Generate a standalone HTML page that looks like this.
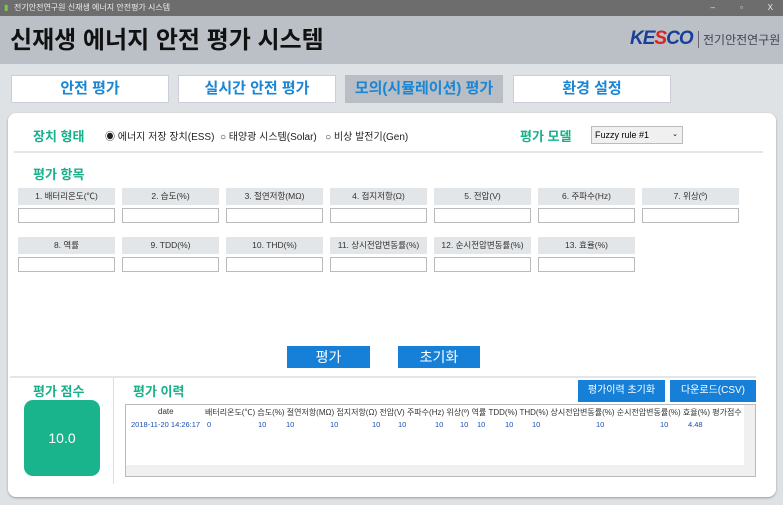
<!DOCTYPE html>
<html><head><meta charset="utf-8"><style>
*{margin:0;padding:0;box-sizing:border-box}
body{width:783px;height:505px;overflow:hidden;background:#dfe2e5;font-family:"Liberation Sans","Noto Sans CJK KR",sans-serif;position:relative}
.a{position:absolute}
.tb{left:0;top:0;width:783px;height:16px;background:#6d6d6d;color:#eee;font-size:8px;line-height:16px;padding-left:14px}
.hd{left:0;top:16px;width:783px;height:48px;background:#bac0c6}
.tab{top:75px;height:28px;width:158px;background:#fff;border:1px solid #ccd;color:#1a86d6;font-size:15px;font-weight:bold;text-align:center;line-height:26px}
.panel{left:8px;top:113px;width:768px;height:384px;background:#fff;border-radius:8px;box-shadow:0 1px 2px #999}
.g{color:#18b08a;font-weight:bold}
.lb{width:97px;height:17px;background:#e3e6e8;font-size:8.5px;text-align:center;line-height:17px;color:#333}
.in{width:97px;height:15px;border:1px solid #bbb;background:#fff}
.bb{background:#1680d8;color:#fff;text-align:center}
.t{font-size:8px;color:#333}
.v{font-size:7.5px;color:#1a4fb0}
</style></head><body>
<div class="a tb"><span style="position:absolute;left:4px;color:#7c4">▮</span>전기안전연구원 신재생 에너지 안전평가 시스템<span style="position:absolute;right:10px;top:0">X</span><span style="position:absolute;right:40px">▫</span><span style="position:absolute;right:68px">–</span></div>
<div class="a hd"></div>
<div class="a" style="left:10px;top:20px;font-size:24px;font-weight:bold;color:#111">신재생 에너지 안전 평가 시스템</div>
<div class="a" style="left:630px;top:28px;font-size:19px;font-weight:bold;font-style:italic;color:#1a3f99;letter-spacing:-1px">KE<span style="color:#d22">S</span>CO</div>
<div class="a" style="left:698px;top:31px;font-size:12px;color:#445;border-left:1px solid #667;padding-left:4px">전기안전연구원</div>
<div class="a tab" style="left:11px">안전 평가</div>
<div class="a tab" style="left:178px">실시간 안전 평가</div>
<div class="a tab" style="left:345px;background:#b8bec4;border-color:#b8bec4">모의(시뮬레이션) 평가</div>
<div class="a tab" style="left:513px">환경 설정</div>
<div class="a panel"></div>
<div class="a g" style="left:33px;top:126px;font-size:13px">장치 형태</div>
<div class="a" style="left:105px;top:128px;font-size:10px;color:#222">◉ 에너지 저장 장치(ESS) &nbsp;○ 태양광 시스템(Solar) &nbsp;&nbsp;○ 비상 발전기(Gen)</div>
<div class="a g" style="left:520px;top:126px;font-size:13px">평가 모델</div>
<div class="a" style="left:591px;top:126px;width:92px;height:18px;border:1px solid #bbb;background:#f0f0f0;font-size:9px;line-height:16px;padding-left:3px">Fuzzy rule #1<span style="position:absolute;right:4px;font-size:7px">⌄</span></div>
<div class="a" style="left:14px;top:151px;width:749px;height:2px;background:#e3e6e8"></div>
<div class="a g" style="left:33px;top:164px;font-size:13px">평가 항목</div>
<div class="a" style="left:18px;top:188px;display:grid;grid-template-columns:repeat(7,97px);column-gap:7px;row-gap:3px">
<div class="lb">1. 배터리온도(℃)</div><div class="lb">2. 습도(%)</div><div class="lb">3. 절연저항(MΩ)</div><div class="lb">4. 접지저항(Ω)</div><div class="lb">5. 전압(V)</div><div class="lb">6. 주파수(Hz)</div><div class="lb">7. 위상(º)</div>
<div class="in"></div><div class="in"></div><div class="in"></div><div class="in"></div><div class="in"></div><div class="in"></div><div class="in"></div>
</div>
<div class="a" style="left:18px;top:237px;display:grid;grid-template-columns:repeat(6,97px);column-gap:7px;row-gap:3px">
<div class="lb">8. 역률</div><div class="lb">9. TDD(%)</div><div class="lb">10. THD(%)</div><div class="lb">11. 상시전압변동률(%)</div><div class="lb">12. 순시전압변동률(%)</div><div class="lb">13. 효율(%)</div>
<div class="in"></div><div class="in"></div><div class="in"></div><div class="in"></div><div class="in"></div><div class="in"></div>
</div>
<div class="a bb" style="left:287px;top:346px;width:83px;height:22px;font-size:14px;line-height:22px">평가</div>
<div class="a bb" style="left:398px;top:346px;width:82px;height:22px;font-size:14px;line-height:22px">초기화</div>
<div class="a" style="left:10px;top:376px;width:746px;height:2px;background:#e3e6e8"></div>
<div class="a" style="left:113px;top:378px;width:1px;height:106px;background:#ddd"></div>
<div class="a g" style="left:33px;top:381px;font-size:13px">평가 점수</div>
<div class="a" style="left:24px;top:400px;width:76px;height:76px;border-radius:9px;background:#19b48c;color:#fff;font-size:14px;text-align:center;line-height:76px">10.0</div>
<div class="a g" style="left:133px;top:381px;font-size:13px">평가 이력</div>
<div class="a bb" style="left:578px;top:380px;width:87px;height:22px;font-size:10px;line-height:22px">평가이력 초기화</div>
<div class="a bb" style="left:670px;top:380px;width:86px;height:22px;font-size:10px;line-height:22px">다운로드(CSV)</div>
<div class="a" style="left:125px;top:404px;width:631px;height:73px;border:1px solid #bbb;background:#fff"></div>
<div class="a" style="left:126px;top:465px;width:629px;height:11px;background:#f0f0f0"></div>
<div class="a" style="left:744px;top:405px;width:11px;height:60px;background:#f0f0f0"></div>
<div class="a t" style="left:158px;top:407px">date</div>
<div class="a t" style="left:205px;top:407px;white-space:nowrap">배터리온도(℃) 습도(%) 절연저항(MΩ) 접지저항(Ω) 전압(V) 주파수(Hz) 위상(º) 역률 TDD(%) THD(%) 상시전압변동률(%) 순시전압변동률(%) 효율(%) 평가점수</div>
<div class="a v" style="left:131px;top:420px">2018-11-20 14:26:17</div>
<div class="a v" style="left:207px;top:420px">0</div>
<div class="a v" style="left:258px;top:420px">10</div><div class="a v" style="left:286px;top:420px">10</div><div class="a v" style="left:330px;top:420px">10</div><div class="a v" style="left:372px;top:420px">10</div><div class="a v" style="left:398px;top:420px">10</div><div class="a v" style="left:435px;top:420px">10</div><div class="a v" style="left:460px;top:420px">10</div><div class="a v" style="left:477px;top:420px">10</div><div class="a v" style="left:505px;top:420px">10</div><div class="a v" style="left:532px;top:420px">10</div><div class="a v" style="left:596px;top:420px">10</div><div class="a v" style="left:660px;top:420px">10</div><div class="a v" style="left:688px;top:420px">4.48</div>
</body></html>
